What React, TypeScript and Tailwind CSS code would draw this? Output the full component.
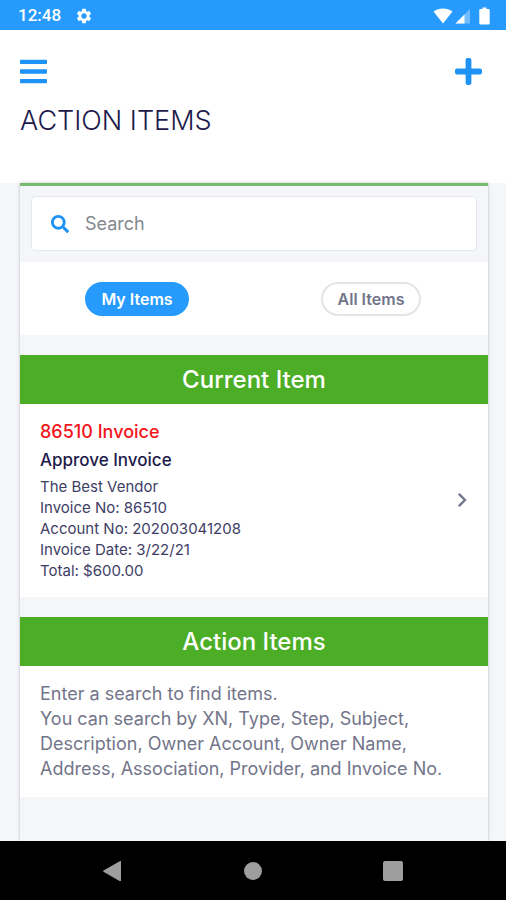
import React from 'react';
import { FaBars, FaPlus, FaSearch } from 'react-icons/fa';
import { MdChevronRight, MdSettings } from 'react-icons/md';

const details = [
  'The Best Vendor',
  'Invoice No: 86510',
  'Account No: 202003041208',
  'Invoice Date: 3/22/21',
  'Total: $600.00',
];

function StatusBar() {
  return (
    <div className="flex h-[30px] shrink-0 items-center bg-[#269bfd] px-4 pt-px text-white">
      <span className="ml-0.5 font-[Roboto] text-[17px] font-medium">12:48</span>
      <MdSettings className="ml-3.5 h-[18px] w-[18px]" />
      <svg className="ml-auto h-4 w-5" viewBox="0 0 20 16" fill="currentColor">
        <path d="M10 15.5 0.5 3.6C3.2 1.4 6.5 0.4 10 0.4s6.800 1 9.500 3.200z" />
      </svg>
      <svg className="ml-0.5 h-4 w-4" viewBox="0 0 16 16" fill="currentColor">
        <path d="M15 1v14.500H0.500z" opacity="0.35" />
        <path d="M9.500 6.500v9h-9z" />
      </svg>
      <svg className="ml-2 h-[18px] w-[11px]" viewBox="0 0 11 18" fill="currentColor">
        <path d="M3.500 0.500h4V2H9.500a1.200 1.200 0 0 1 1.200 1.200v13.100a1.200 1.200 0 0 1-1.200 1.200h-8A1.200 1.200 0 0 1 0.300 16.300V3.200A1.200 1.200 0 0 1 1.500 2h2z" />
      </svg>
    </div>
  );
}

function SectionTitle({ children }: { children: React.ReactNode }) {
  return (
    <h2 className="bg-[#4cae26] text-center text-2xl leading-[49px] font-medium text-white">
      {children}
    </h2>
  );
}

function NavBar() {
  return (
    <nav className="flex h-[59px] shrink-0 items-center justify-center gap-[120px] bg-black text-[#9e9e9e]">
      <button aria-label="Back">
        <svg className="h-5 w-5" viewBox="0 0 20 20" fill="currentColor">
          <path d="M18 0.500v19.500a0.500 0.500 0 0 1-0.800 0.400L0.500 10.700a0.800 0.800 0 0 1 0-1.300L17.200 0.100a0.500 0.500 0 0 1 0.800 0.400z" />
        </svg>
      </button>
      <button aria-label="Home" className="h-5 w-5 p-px">
        <span className="block h-[18px] w-[18px] rounded-full bg-[#9e9e9e]" />
      </button>
      <button aria-label="Recent apps" className="h-5 w-5">
        <span className="block h-5 w-5 rounded-xs bg-[#9e9e9e]" />
      </button>
    </nav>
  );
}

export default function App() {
  return (
    <div className="flex min-h-screen flex-col bg-[#f4f6fa] font-[Inter,sans-serif] text-[#1d1a4b]">
      <StatusBar />
      <header className="bg-white px-5 pt-[26px] pb-11">
        <div className="flex items-center justify-between text-[#1e93f5]">
          <button aria-label="Menu">
            <FaBars className="h-[31px] w-[27px]" />
          </button>
          <button aria-label="Add" className="mr-1">
            <FaPlus className="h-[31px] w-[27px]" />
          </button>
        </div>
        <h1 className="mt-4 text-[27px] leading-9 font-light">ACTION ITEMS</h1>
      </header>

      <main className="mr-[18px] ml-5 flex-1 border-t-3 border-[#78bd6e] shadow-[0_0_3px_rgba(0,0,0,0.25)]">
        <label className="mx-[11px] mt-[10px] mb-[11px] flex h-[55px] items-center rounded-sm border border-[#e4e8ed] bg-white px-[19px]">
          <FaSearch className="h-[18px] w-[18px] shrink-0 text-[#1e93f5]" />
          <input
            type="text"
            aria-label="Search"
            placeholder="Search"
            className="ml-4 min-w-0 flex-1 text-lg outline-none placeholder:text-[#85878d]"
          />
        </label>

        <div className="grid h-[73px] grid-cols-2 items-center justify-items-center bg-white text-base font-semibold">
          <button className="h-[34px] w-[104px] rounded-full bg-[#269bfd] text-white">My Items</button>
          <button className="h-[34px] w-[100px] rounded-full border-2 border-[#e1e4e8] text-[#73758a]">
            All Items
          </button>
        </div>

        <section className="mt-5">
          <SectionTitle>Current Item</SectionTitle>
          <div className="flex items-center justify-between bg-white pt-[14px] pr-3 pb-4 pl-5">
            <div>
              <h3 className="text-lg leading-7 font-medium text-[#f3141c]">86510 Invoice</h3>
              <p className="mb-0.5 text-[17px] leading-7 font-medium">Approve Invoice</p>
              {details.map((line) => (
                <p key={line} className="text-[15px] leading-[21px] text-[#403e66]">
                  {line}
                </p>
              ))}
            </div>
            <button aria-label="Open item">
              <MdChevronRight className="h-7 w-7 text-[#73758a]" />
            </button>
          </div>
        </section>

        <section className="mt-5">
          <SectionTitle>Action Items</SectionTitle>
          <div className="bg-white px-5 pt-[15px] pb-4 text-lg leading-[25px] text-[#73758a]">
            <p>Enter a search to find items.</p>
            <p>
              You can search by XN, Type, Step, Subject, Description, Owner Account, Owner Name,
              Address, Association, Provider, and Invoice No.
            </p>
          </div>
        </section>
      </main>

      <NavBar />
    </div>
  );
}
